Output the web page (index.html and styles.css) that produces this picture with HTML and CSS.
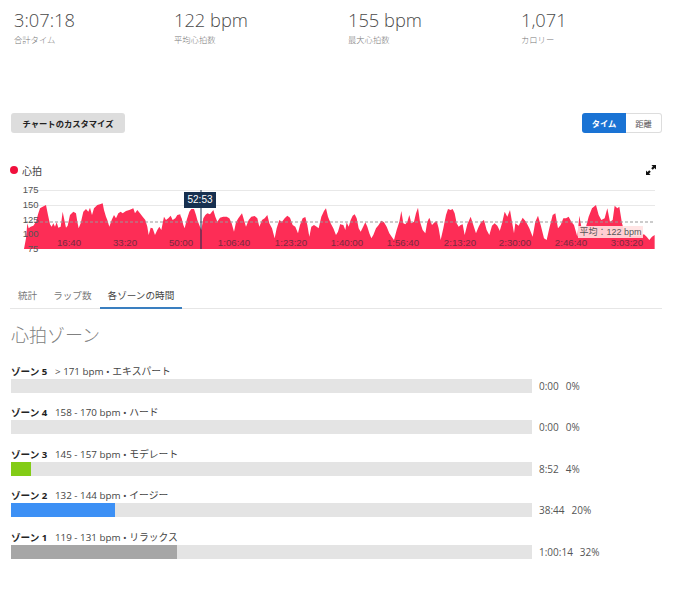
FILE: index.html
```html
<!DOCTYPE html>
<html lang="ja">
<head>
  <meta charset="UTF-8">
  <title>心拍ゾーン</title>
  <link rel="stylesheet" href="styles.css">
</head>
<body>
  <div class="stats">
    <div class="stat">
      <div class="stat-value">3:07:18</div>
      <div class="stat-label">合計タイム</div>
    </div>
    <div class="stat">
      <div class="stat-value">122 bpm</div>
      <div class="stat-label">平均心拍数</div>
    </div>
    <div class="stat">
      <div class="stat-value">155 bpm</div>
      <div class="stat-label">最大心拍数</div>
    </div>
    <div class="stat">
      <div class="stat-value">1,071</div>
      <div class="stat-label">カロリー</div>
    </div>
  </div>

  <div class="toolbar">
    <button class="btn-customize">チャートのカスタマイズ</button>
    <div class="toggle">
      <button class="toggle-btn active">タイム</button>
      <button class="toggle-btn">距離</button>
    </div>
  </div>

  <div class="chart-header">
    <div class="legend"><span class="legend-dot"></span>心拍</div>
    <svg class="expand-icon" width="10" height="10" viewBox="0 0 10 10">
      <path d="M10 0v4.600L8.500 3.100 6.800 4.800 5.200 3.200 6.900 1.500 5.400 0zM0 10V5.400l1.500 1.500 1.700-1.700 1.600 1.600-1.700 1.700L4.600 10z"/>
    </svg>
  </div>

  <!-- Heart rate chart -->
  <div class="chart">
    <svg class="chart-svg" width="652" height="70" viewBox="10 185 652 70">
      <line class="grid" x1="25" y1="190.5" x2="655" y2="190.5"/>
      <line class="grid" x1="25" y1="205.5" x2="655" y2="205.5"/>
      <g class="area">
        <polygon transform="translate(20 185) scale(.3333)" points="12,192 18,160 22,115 26,130 32,125 40,122 48,110 55,85 60,70 68,65 78,60 84,90 90,118 95,125 100,115 105,125 110,112 115,128 122,125 128,80 132,100 138,128 143,122 150,90 160,80 168,85 172,110 176,130 182,115 190,80 198,72 205,80 210,68 216,90 222,70 232,60 240,58 248,55 252,75 258,95 262,105 268,125 275,105 282,90 288,100 295,85 302,80 308,85 318,78 328,75 340,70 345,85 352,75 360,85 368,95 376,105 382,125 386,150 392,128 398,130 405,150 412,135 418,125 424,135 432,95 438,105 445,100 452,92 458,105 466,100 472,90 481,88 481,192"/>
        <polygon transform="translate(180 185) scale(.3333)" points="0,90 5,100 10,120 14,130 20,105 28,80 34,72 42,72 48,90 52,105 60,125 64,135 70,100 76,90 82,85 90,88 100,75 106,95 112,110 120,98 130,95 140,95 148,100 155,115 162,140 168,112 175,100 186,85 192,105 198,125 206,105 214,95 224,93 232,100 238,125 246,105 254,100 262,90 268,115 276,130 284,160 290,130 298,105 306,110 314,100 322,92 330,98 338,120 346,125 354,145 360,120 368,100 376,96 382,120 388,155 394,125 402,120 410,125 416,130 424,95 432,78 438,70 444,95 452,115 460,130 468,150 474,140 481,116 481,192 0,192"/>
        <polygon transform="translate(340 185) scale(.3333)" points="0,118 10,120 16,135 20,112 26,125 32,105 38,92 44,88 50,100 56,130 62,140 68,128 76,112 82,125 88,145 94,160 100,150 108,130 116,120 124,107 132,112 140,125 148,145 155,155 162,165 170,135 178,110 184,78 190,115 196,118 202,110 208,90 214,115 222,110 228,85 234,68 240,110 248,135 256,145 262,110 268,98 276,120 284,112 290,108 296,130 302,165 310,130 318,90 324,72 332,75 338,72 344,85 350,115 356,125 362,120 368,118 374,150 382,118 392,95 400,120 408,145 416,125 424,110 432,105 440,135 448,150 456,122 464,115 472,122 481,140 481,192 0,192"/>
        <polygon transform="translate(500 185) scale(.3333)" points="0,135 6,115 14,80 22,95 30,75 36,110 42,145 46,115 56,122 68,98 78,110 88,130 98,155 106,110 114,92 122,120 132,160 140,165 148,130 158,90 166,85 174,130 182,120 190,100 198,100 206,95 214,110 222,120 232,155 238,92 244,125 258,125 266,95 276,70 288,60 296,90 304,105 314,100 322,70 330,110 338,105 344,62 352,70 358,65 366,115 376,150 400,152 420,152 432,148 440,155 448,165 456,155 464,150 464,192 0,192"/>
      </g>
      <line class="avg-line" x1="25" y1="222" x2="655" y2="222"/>
      <line class="cursor" x1="201" y1="190" x2="201" y2="249"/>
      <g class="y-labels">
        <text x="38.500" y="193">175</text>
        <text x="38.500" y="208">150</text>
        <text x="38.500" y="222.500">125</text>
        <text x="38.500" y="237">100</text>
        <text x="33" y="252">75</text>
      </g>
      <g class="x-labels">
        <text x="69" y="246">16:40</text>
        <text x="125" y="246">33:20</text>
        <text x="181" y="246">50:00</text>
        <text x="234" y="246">1:06:40</text>
        <text x="291" y="246">1:23:20</text>
        <text x="347" y="246">1:40:00</text>
        <text x="403" y="246">1:56:40</text>
        <text x="460" y="246">2:13:20</text>
        <text x="515" y="246">2:30:00</text>
        <text x="571" y="246">2:46:40</text>
        <text x="627" y="246">3:03:20</text>
      </g>
    </svg>
    <div class="chart-tooltip">52:53</div>
    <div class="avg-label">平均：122 bpm</div>
  </div>

  <div class="tabs">
    <div class="tab">統計</div>
    <div class="tab">ラップ数</div>
    <div class="tab active">各ゾーンの時間</div>
  </div>

  <h2 class="zones-title">心拍ゾーン</h2>

  <div class="zones">
    <div class="zone">
      <div class="zone-label"><strong>ゾーン 5</strong><span>&gt; 171 bpm • エキスパート</span></div>
      <div class="zone-row">
        <div class="zone-track"></div>
        <div class="zone-value"><span>0:00</span><span>0%</span></div>
      </div>
    </div>
    <div class="zone">
      <div class="zone-label"><strong>ゾーン 4</strong><span>158 - 170 bpm • ハード</span></div>
      <div class="zone-row">
        <div class="zone-track"></div>
        <div class="zone-value"><span>0:00</span><span>0%</span></div>
      </div>
    </div>
    <div class="zone">
      <div class="zone-label"><strong>ゾーン 3</strong><span>145 - 157 bpm • モデレート</span></div>
      <div class="zone-row">
        <div class="zone-track"><div class="zone-fill fill-green" style="width: 20px"></div></div>
        <div class="zone-value"><span>8:52</span><span>4%</span></div>
      </div>
    </div>
    <div class="zone">
      <div class="zone-label"><strong>ゾーン 2</strong><span>132 - 144 bpm • イージー</span></div>
      <div class="zone-row">
        <div class="zone-track"><div class="zone-fill fill-blue" style="width: 104px"></div></div>
        <div class="zone-value"><span>38:44</span><span>20%</span></div>
      </div>
    </div>
    <div class="zone">
      <div class="zone-label"><strong>ゾーン 1</strong><span>119 - 131 bpm • リラックス</span></div>
      <div class="zone-row">
        <div class="zone-track"><div class="zone-fill fill-grey" style="width: 166px"></div></div>
        <div class="zone-value"><span>1:00:14</span><span>32%</span></div>
      </div>
    </div>
  </div>
</body>
</html>
```

FILE: styles.css
```css
* {
  margin: 0;
  padding: 0;
  box-sizing: border-box;
}

body {
  font-family: "Open Sans", "Noto Sans CJK JP", sans-serif;
  color: #444;
  background: #fff;
  overflow: hidden;
}

.stats {
  display: grid;
  grid-template-columns: 160px 174px 173px 1fr;
  padding: 8px 0 0 14px;
  height: 113px;
}

.stat-value {
  font-size: 18.3px;
  font-weight: 300;
  line-height: 24px;
  color: #4a4a4a;
}

.stat-label {
  margin-top: 2px;
  font-size: 8.3px;
  font-weight: 300;
  line-height: 12px;
  color: #777;
}

.toolbar {
  display: flex;
  justify-content: space-between;
  padding: 0 18px 0 11px;
  height: 20px;
}

button {
  font-family: inherit;
  border: none;
}

.btn-customize {
  width: 114px;
  height: 20px;
  background: #ddd;
  border-radius: 3px;
  font-size: 8.3px;
  font-weight: 700;
  color: #222;
}

.toggle {
  display: flex;
  width: 80px;
}

.toggle-btn {
  flex: 1;
  background: #fff;
  border: 1px solid #ddd;
  border-left: none;
  border-radius: 0 3px 3px 0;
  font-size: 8.3px;
  color: #555;
}

.toggle-btn.active {
  flex: 0 0 44px;
  background: #1a73d4;
  border: none;
  border-radius: 3px 0 0 3px;
  font-weight: 700;
  color: #fff;
}

.chart-header {
  display: flex;
  justify-content: space-between;
  align-items: center;
  height: 16px;
  margin-top: 29px;
  padding: 0 24px 0 10px;
}

.legend {
  display: flex;
  align-items: center;
  font-size: 10px;
  color: #444;
}

.legend-dot {
  width: 8px;
  height: 8px;
  margin-right: 4px;
  border-radius: 50%;
  background: #f0103c;
}

.expand-icon {
  fill: #111;
}

.chart {
  position: relative;
  margin: 7px 18px 0 10px;
  height: 70px;
}

.chart-svg {
  display: block;
}

.grid {
  stroke: #e8e8e8;
  stroke-width: 1;
}

.area polygon {
  fill: #fd2d56;
}

.avg-line {
  stroke: #999;
  stroke-width: 1;
  stroke-dasharray: 3 2;
}

.cursor {
  stroke: #17304f;
  stroke-width: 1;
}

.y-labels text {
  font-family: "Liberation Sans", sans-serif;
  font-size: 9.5px;
  fill: #555;
  text-anchor: end;
}

.y-labels text:last-child {
  text-anchor: middle;
}

.x-labels text {
  font-family: "Liberation Sans", sans-serif;
  font-size: 9.7px;
  fill: #7a2a40;
  text-anchor: middle;
}

.chart-tooltip {
  position: absolute;
  left: 174px;
  top: 7px;
  width: 32px;
  height: 16px;
  background: #17304f;
  color: #fff;
  font-family: "Liberation Sans", sans-serif;
  font-size: 10px;
  line-height: 16px;
  text-align: center;
}

.avg-label {
  position: absolute;
  left: 568px;
  top: 41px;
  width: 65px;
  height: 12px;
  background: rgba(255, 225, 225, 0.9);
  color: #555;
  font-family: "Liberation Sans", "Noto Sans CJK JP", sans-serif;
  font-size: 9px;
  line-height: 12px;
  text-align: center;
  white-space: nowrap;
}

.tabs {
  display: flex;
  margin: 29px 18px 0 10px;
  height: 25px;
  border-bottom: 1px solid #e6e6e6;
}

.tab {
  padding: 0 8px;
  font-size: 9.6px;
  line-height: 24px;
  color: #777;
}

.tab.active {
  color: #444;
  height: 25px;
  border-bottom: 2px solid #3a7fc0;
}

.zones-title {
  margin: 13px 0 0 11px;
  font-size: 18px;
  font-weight: 300;
  line-height: 26px;
  color: #808080;
}

.zones {
  margin: 16px 0 0 11px;
}

.zone {
  height: 41.4px;
}

.zone-label {
  display: flex;
  height: 15px;
  font-size: 9.8px;
  line-height: 16px;
  color: #444;
}

.zone-label strong {
  width: 44px;
  font-size: 9.6px;
  color: #222;
}

.zone-row {
  display: flex;
  align-items: center;
  height: 14px;
}

.zone-track {
  width: 521px;
  height: 14px;
  background: #e4e4e4;
}

.zone-fill {
  height: 100%;
}

.fill-green {
  background: #83cc16;
}

.fill-blue {
  background: #3c90f5;
}

.fill-grey {
  background: #a6a6a6;
}

.zone-value {
  display: flex;
  gap: 7px;
  margin-left: 7px;
  font-size: 10px;
  color: #555;
}
```
